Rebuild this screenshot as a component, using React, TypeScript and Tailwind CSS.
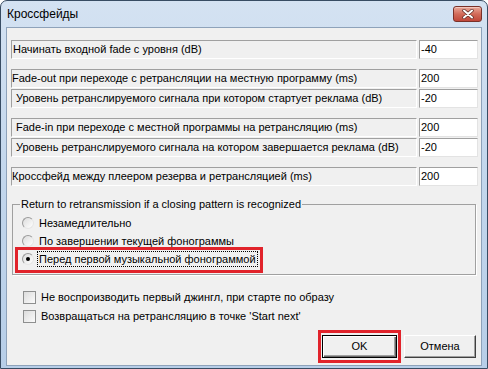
import React from "react";

const font = { fontFamily: '"Liberation Sans", Arial, sans-serif' };

type Row = { label: string; value: string; mt: string; pl: string };

const rows: Row[] = [
  { label: "Начинать входной fade с уровня (dB)", value: "-40", mt: "mt-[12px]", pl: "pl-[1px]" },
  { label: "Fade-out при переходе с ретрансляции на местную программу (ms)", value: "200", mt: "mt-[10px]", pl: "pl-0" },
  { label: "Уровень ретранслируемого сигнала при котором стартует реклама (dB)", value: "-20", mt: "mt-[1px]", pl: "pl-[4px]" },
  { label: "Fade-in при переходе с местной программы на ретрансляцию (ms)", value: "200", mt: "mt-[10px]", pl: "pl-[4px]" },
  { label: "Уровень ретранслируемого сигнала на котором завершается реклама (dB)", value: "-20", mt: "mt-[1px]", pl: "pl-[4px]" },
  { label: "Кроссфейд между плеером резерва и ретрансляцией (ms)", value: "200", mt: "mt-[10px]", pl: "pl-0" },
];

const radios = [
  "Незамедлительно",
  "По завершении текущей фонограммы",
  "Перед первой музыкальной фонограммой",
];

function Radio({ checked }: { checked?: boolean }) {
  return (
    <span className="flex h-[12px] w-[12px] shrink-0 items-center justify-center rounded-full border border-t-[#9a9a9a] border-l-[#9a9a9a] border-b-[#e6e6e6] border-r-[#e6e6e6] bg-gradient-to-br from-[#dcdcdc] to-[#ffffff]">
      {checked && <span className="h-[4px] w-[4px] rounded-full bg-black" />}
    </span>
  );
}

function Checkbox() {
  return (
    <span className="h-[13px] w-[13px] shrink-0 border border-[#8e8f8f] bg-gradient-to-br from-[#dcdcdc] to-[#fbfbfb]" />
  );
}

function Button({ children, def }: { children: React.ReactNode; def?: boolean }) {
  return (
    <div
      className={
        "flex h-[23px] items-center justify-center bg-[#f0f0f0] text-[11px] text-black " +
        (def
          ? "w-[75px] border border-black shadow-[inset_1px_1px_0_#ffffff,inset_-1px_-1px_0_#696969,inset_-2px_-2px_0_#a0a0a0]"
          : "w-[72px] border border-t-white border-l-white border-b-[#404040] border-r-[#404040] shadow-[inset_-1px_-1px_0_#a0a0a0]")
      }
    >
      {children}
    </div>
  );
}

export default function App() {
  return (
    <div
      className="h-[369px] w-[488px] overflow-hidden rounded-t-[7px] border border-[#384c63] bg-gradient-to-b from-[#d4e2f2] via-[#c2d6ec] to-[#b7cee8] text-black"
      style={font}
    >
      <div className="flex h-[26px] items-start justify-between">
        <div className="pl-[6px] pt-[6px] text-[12px] leading-[14px]">Кроссфейды</div>
        <div className="mr-[5px] mt-[5px] flex h-[16px] w-[29px] items-center justify-center rounded-[3px] border border-[#7a3129] bg-gradient-to-b from-[#e9a99b] via-[#d26b5a] to-[#c0473a] shadow-[inset_0_1px_0_#f3c7bd]">
          <svg width="12" height="10" viewBox="0 0 12 10">
            <path d="M2 1.5 L10 8.5 M10 1.5 L2 8.5" stroke="#5a2a25" strokeWidth="3.4" strokeLinecap="round" />
            <path d="M2 1.5 L10 8.5 M10 1.5 L2 8.5" stroke="#ffffff" strokeWidth="2" strokeLinecap="round" />
          </svg>
        </div>
      </div>
      <div className="mx-[5px] h-[339px] border border-[#8ea2ba] bg-[#f0f0f0] text-[11px] leading-[13px]">
        <div className="flex flex-col pl-[4px] pr-[3px]">
          {rows.map((r) => (
            <div key={r.label} className={"flex h-[19px] gap-[2px] " + r.mt}>
              <div
                className={
                  "flex w-[406px] items-center whitespace-nowrap border border-t-[#a0a0a0] border-l-[#a0a0a0] border-b-white border-r-white " +
                  r.pl
                }
              >
                {r.label}
              </div>
              <div className="flex w-[59px] items-center border border-t-[#a0a0a0] border-l-[#a0a0a0] border-b-[#e3e3e3] border-r-[#e3e3e3] bg-white pl-[1px]">
                {r.value}
              </div>
            </div>
          ))}
        </div>

        <fieldset className="ml-[5px] mt-[12px] w-[464px] border border-[#a0a0a0] pb-[6px] pl-[7px] shadow-[1px_1px_0_#ffffff]">
          <legend className="px-[1px] leading-[13px]">
            Return to retransmission if a closing pattern is recognized
          </legend>
          <div className="mt-[3px] flex flex-col">
            {radios.map((t, i) => (
              <div key={t} className="relative ml-[2px] flex h-[18px] items-center">
                <Radio checked={i === 2} />
                {i === 2 ? (
                  <span className="ml-[3px] border border-dotted border-black px-[1px] leading-[14px]">{t}</span>
                ) : (
                  <span className="ml-[5px]">{t}</span>
                )}
                {i === 2 && (
                  <div className="absolute left-[-7px] top-[-3px] h-[26px] w-[248px] border-[3px] border-[#e1232b]" />
                )}
              </div>
            ))}
          </div>
        </fieldset>

        <div className="ml-[16px] mt-[13px] flex flex-col">
          <div className="flex h-[19px] items-center gap-[5px]">
            <Checkbox />
            <span>Не воспроизводить первый джингл, при старте по образу</span>
          </div>
          <div className="flex h-[19px] items-center gap-[5px]">
            <Checkbox />
            <span>Возвращаться на ретрансляцию в точке 'Start next'</span>
          </div>
        </div>

        <div className="mr-[5px] mt-[9px] flex justify-end gap-[7px]">
          <div className="relative">
            <Button def>OK</Button>
            <div className="absolute left-[-4px] top-[-5px] h-[33px] w-[83px] border-[3px] border-[#e1232b]" />
          </div>
          <Button>Отмена</Button>
        </div>
      </div>
    </div>
  );
}
